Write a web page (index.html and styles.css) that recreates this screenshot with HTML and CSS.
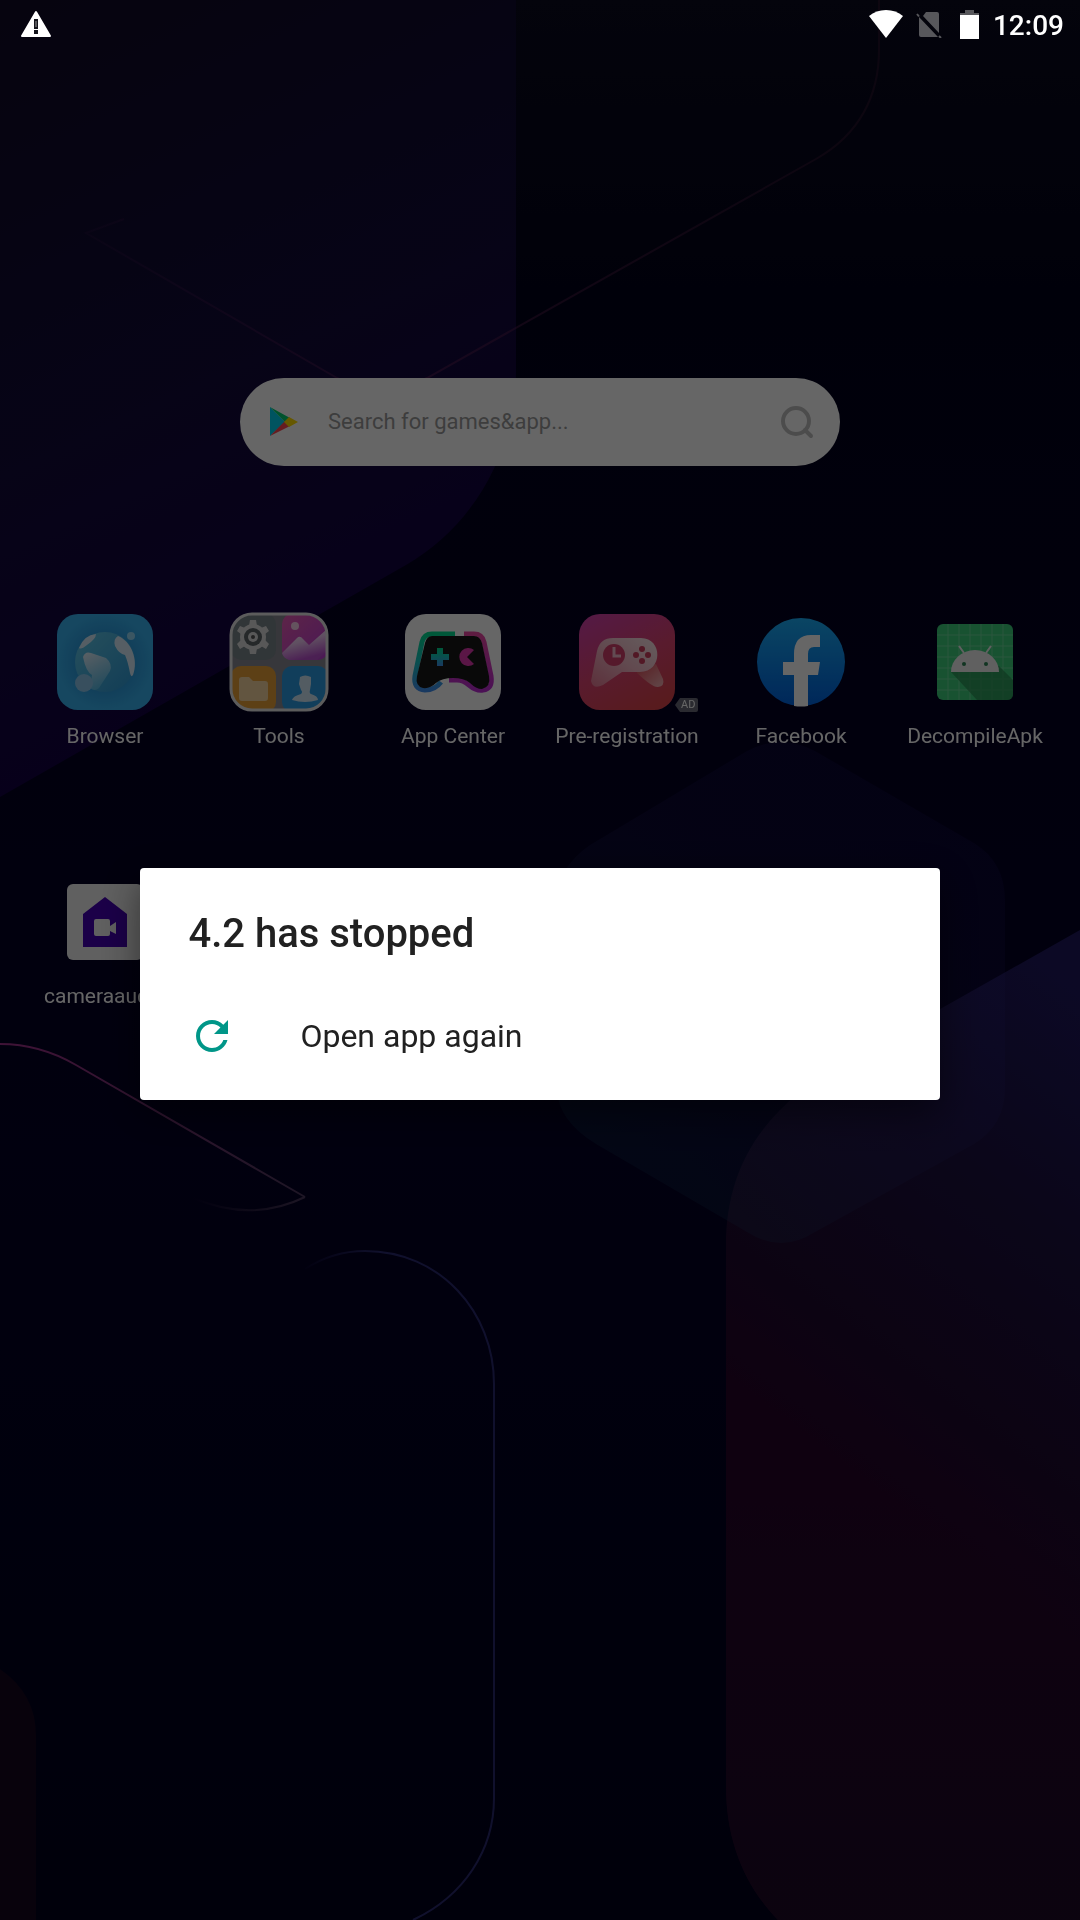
FILE: index.html
```html
<!DOCTYPE html>
<html lang="en">
<head>
<meta charset="utf-8">
<meta name="viewport" content="width=device-width, initial-scale=1">
<title>Home</title>
<link rel="stylesheet" href="styles.css">
</head>
<body>
<svg class="wallpaper" viewBox="0 0 1080 1920" preserveAspectRatio="xMidYMid slice" aria-hidden="true">
  <defs>
    <linearGradient id="sky" x1="0" y1="0" x2="0" y2="1">
      <stop offset="0" stop-color="#0a0a1e"/><stop offset=".15" stop-color="#02021a"/><stop offset=".3" stop-color="#030020"/>
      <stop offset=".6" stop-color="#040026"/><stop offset="1" stop-color="#00001c"/>
    </linearGradient>
    <linearGradient id="violet" x1="0" y1="0" x2=".3" y2="1">
      <stop offset="0" stop-color="#0f0b26"/><stop offset=".55" stop-color="#120a3a"/><stop offset="1" stop-color="#130046"/>
    </linearGradient>
    <linearGradient id="plum" gradientUnits="userSpaceOnUse" x1="1080" y1="980" x2="760" y2="1400">
      <stop offset="0" stop-color="#1e185e"/><stop offset=".4" stop-color="#1c1040"/><stop offset=".75" stop-color="#1e0a30"/><stop offset="1" stop-color="#26042a"/>
    </linearGradient>
    <linearGradient id="plumEnd" x1="0" y1="0" x2="0" y2="1">
      <stop offset="0" stop-color="#1c0c2c" stop-opacity="0"/><stop offset="1" stop-color="#1e0a26" stop-opacity=".9"/>
    </linearGradient>
    <linearGradient id="hexa" x1="1" y1="0" x2="0" y2="1">
      <stop offset="0" stop-color="#3020a0" stop-opacity=".12"/><stop offset=".5" stop-color="#303080" stop-opacity=".16"/><stop offset="1" stop-color="#107070" stop-opacity=".2"/>
    </linearGradient>
    <linearGradient id="fadeA" gradientUnits="userSpaceOnUse" x1="86" y1="0" x2="878" y2="0">
      <stop offset="0" stop-color="#502060" stop-opacity=".15"/><stop offset=".4" stop-color="#602058" stop-opacity=".55"/><stop offset="1" stop-color="#502040" stop-opacity=".35"/>
    </linearGradient>
    <linearGradient id="fadeB" gradientUnits="userSpaceOnUse" x1="0" y1="1040" x2="305" y2="1210">
      <stop offset="0" stop-color="#a0308a"/><stop offset="1" stop-color="#4a385c"/>
    </linearGradient>
    <linearGradient id="fadeC" gradientUnits="userSpaceOnUse" x1="193" y1="0" x2="305" y2="0">
      <stop offset="0" stop-color="#40304e" stop-opacity="0"/><stop offset="1" stop-color="#4a385c"/>
    </linearGradient>
    <linearGradient id="fadeD" gradientUnits="userSpaceOnUse" x1="300" y1="0" x2="380" y2="0">
      <stop offset="0" stop-color="#2a2a70" stop-opacity="0"/><stop offset="1" stop-color="#2a2a70"/>
    </linearGradient>
  </defs>
  <rect width="1080" height="1920" fill="url(#sky)"/>
  <path fill="url(#violet)" d="M0 0H516V370C516 450 475 525 406 565L0 797Z"/>
  <path fill="url(#plum)" d="M1080 930L850 1060C770 1102 726 1160 726 1245V1786C726 1840 744 1885 778 1920H1080Z"/>
  <path fill="url(#plumEnd)" d="M726 1500V1786C726 1840 744 1885 778 1920H1080V1500Z"/>
  <path fill="url(#hexa)" d="M747 751Q781 733 815 751L974 843Q1005 862 1005 900V1088Q1005 1125 974 1144L815 1232Q781 1254 747 1232L596 1144Q557 1120 557 1088V900Q557 868 590 845Z"/>
  <path fill="#140620" d="M0 1669Q36 1694 36 1735V1920H0Z"/>
  <g fill="none" stroke-width="2">
    <path stroke="url(#fadeA)" d="M124 219L86 233L337 378Q382 402 427 378L816 159C860 134 879 95 879 50V0"/>
    <path stroke="url(#fadeB)" d="M0 1044Q40 1044 76 1065L305 1197"/>
    <path stroke="url(#fadeC)" d="M305 1197Q252 1223 193 1198"/>
    <path stroke="url(#fadeD)" d="M305 1269C325 1256 345 1251 365 1251C440 1251 494 1312 494 1384V1798C494 1850 464 1896 413 1920"/>
  </g>
</svg>

<header class="status">
  <svg class="status-warn" viewBox="0 0 32 28" role="img" aria-label="Warning">
    <path fill="#fff" stroke="#fff" stroke-width="2" stroke-linejoin="round" d="M16 2L30 26H2Z"/>
    <path fill="none" stroke="#14141c" stroke-width="4" d="M16 9v10M16 20v4"/>
    <path fill="none" stroke="#999" stroke-width="1" d="M16 11v6"/>
  </svg>
  <div class="status-right">
    <svg class="ico-wifi" viewBox="0 0 34 28" role="img" aria-label="Wi-Fi"><path fill="#fff" d="M17 28L0 6Q7 0 17 0T34 6Z"/></svg>
    <svg class="ico-sim" viewBox="0 0 26 28" role="img" aria-label="No SIM"><path fill="#57575b" d="M10 2H21Q23 2 23 4V23L7 6ZM3 7L22 27H5Q3 27 3 25Z"/><path stroke="#57575b" stroke-width="2" d="M1 4L3 6.500M23 26L25 28"/></svg>
    <svg class="ico-bat" viewBox="0 0 20 30" role="img" aria-label="Battery"><path fill="#57575b" d="M5 1H14V4H19V7H0V4H5Z"/><path fill="#fff" d="M0 6H19V30H0Z"/></svg>
    <time class="clock">12:09</time>
  </div>
</header>

<main class="home">
  <form class="search" role="search">
    <svg class="play" viewBox="0 0 30 32" aria-hidden="true">
      <path fill="#00d2f0" d="M1 1V30L16 16Z"/><path fill="#00d070" d="M1 1L21 12L16 16Z"/><path fill="#ff4650" d="M1 30L21 20L16 15Z"/><path fill="#ffdc00" d="M20 11L29 16L20 21L15 16Z"/>
    </svg>
    <input class="search-input" type="text" aria-label="Search" placeholder="Search for games&amp;app...">
    <button class="search-go" type="button" aria-label="Go">
      <svg viewBox="0 0 34 34" fill="none" stroke="#bfbfbf" stroke-width="4" stroke-linecap="round"><circle cx="16" cy="16" r="13"/><path d="M25 25L31 31"/></svg>
    </button>
  </form>

  <nav class="apps">
    <a class="app" href="#browser">
      <span class="icon"><svg viewBox="0 0 96 96" aria-hidden="true">
        <defs><radialGradient id="bb"><stop offset=".5" stop-color="#2a98dc"/><stop offset="1" stop-color="#38b2f0"/></radialGradient>
        <linearGradient id="bg" x1="0" y1="0" x2="1" y2="1"><stop offset="0" stop-color="#62c8e8"/><stop offset="1" stop-color="#2c98d6"/></linearGradient>
        <linearGradient id="bl" x1="0" y1="0" x2=".4" y2="1"><stop offset="0" stop-color="#e4f0fa"/><stop offset="1" stop-color="#5cbce6"/></linearGradient></defs>
        <rect width="96" height="96" rx="21" fill="url(#bb)"/><circle cx="48" cy="48" r="30" fill="url(#bg)"/>
        <path fill="url(#bl)" d="M26 43Q28 37 34 39L49 44Q56 50 53 57L42 74Q38 78 33 74L35 61Q29 58 26 43Z"/>
        <path fill="#d4ecfa" d="M22 34Q27 21 39 20Q39 25 30 31Q24 36 22 34Z"/>
        <path fill="#d8ecfa" d="M61 22C74 27 82 46 76 61Q74 64 73 59Q71 48 68 41Q62 40 58 32Q56 25 61 22Z"/>
        <circle cx="74" cy="22" r="4" fill="#94d6f6"/><circle cx="27" cy="69" r="9" fill="#8cc6ec"/>
      </svg></span>
      <span class="label">Browser</span>
    </a>
    <a class="app" href="#tools">
      <span class="icon"><svg viewBox="0 0 96 96" aria-hidden="true">
        <defs><clipPath id="tc"><rect x="1" y="1" width="94" height="94" rx="20"/></clipPath>
        <linearGradient id="tp" x1="0" y1="0" x2="1" y2="1"><stop offset="0" stop-color="#ea5cb4"/><stop offset="1" stop-color="#b83cd4"/></linearGradient>
        <linearGradient id="tm" x1="0" y1="0" x2=".4" y2="1"><stop offset="0" stop-color="#fff"/><stop offset=".5" stop-color="#f0c8f4"/><stop offset="1" stop-color="#bc50d0"/></linearGradient></defs>
        <g clip-path="url(#tc)"><rect width="96" height="96" fill="#8a8a94"/>
        <rect x="0" y="0" width="45" height="46" rx="10" fill="#7c878c"/>
        <rect x="51" y="0" width="46" height="46" rx="10" fill="url(#tp)"/>
        <rect x="0" y="52" width="45" height="46" rx="10" fill="#e8a038"/>
        <rect x="51" y="52" width="46" height="46" rx="10" fill="#2c9ce4"/>
        <g fill="#dcdddd"><circle cx="22" cy="23" r="13"/><path d="M18 12L19 6H25L26 12ZM18 34L19 40H25L26 34Z"/>
        <path d="M10 20L6 17L9 12L14 14ZM34 20L38 17L35 12L30 14ZM10 26L6 30L9 35L14 32ZM34 26L38 30L35 35L30 32Z"/></g>
        <circle cx="22" cy="23" r="9" fill="#5c6468"/><circle cx="22" cy="23" r="5" fill="#dcdcdc"/><circle cx="22" cy="23" r="2" fill="#555"/>
        <circle cx="64" cy="12" r="4" fill="#fad0ec"/><path fill="url(#tm)" d="M51 39L66 24Q69 21 72 25L78 31L96 15V37L86 46H58Q52 44 51 39Z"/>
        <path fill="#f4d4a0" d="M8 66Q8 63 11 63H18L22 67H34Q37 67 37 70V84Q37 87 34 87H11Q8 87 8 84Z"/>
        <path fill="#d0e6f6" d="M69 63Q74 60 80 63V70L79 76Q78 79 80 80Q87 82 87 86Q74 90 61 86Q62 82 70 80Q72 78 70 76L68 70Z"/></g>
        <rect x="0" y="0" width="96" height="96" rx="21" fill="none" stroke="#e6e6e6" stroke-width="3"/>
      </svg></span>
      <span class="label">Tools</span>
    </a>
    <a class="app" href="#appcenter">
      <span class="icon"><svg viewBox="0 0 96 96" aria-hidden="true">
        <defs><linearGradient id="al" x1="0" y1="0" x2="0" y2="1"><stop offset="0" stop-color="#00dc90"/><stop offset=".45" stop-color="#14c8c0"/><stop offset="1" stop-color="#4090f0"/></linearGradient>
        <linearGradient id="ar" x1="0" y1="0" x2="0" y2="1"><stop offset="0" stop-color="#ec48a4"/><stop offset="1" stop-color="#bc2cd4"/></linearGradient></defs>
        <rect width="96" height="96" rx="21" fill="#fff"/>
        <path fill="none" stroke="url(#al)" stroke-width="5" d="M50 20H27Q19 20 17 28L10 62Q8 75 20 76Q30 76 36 68"/>
        <path fill="none" stroke="url(#ar)" stroke-width="5" d="M59 20H69Q77 20 79 28L86 62Q88 75 78 76Q71 77 64 71Q58 66 52 66H44"/>
        <path fill="#181818" d="M27 22H69Q75 22 77 29L84 62Q86 73 77 75Q71 75 65 69Q59 64 48 64Q37 64 31 69Q25 75 18 74Q10 72 12 62L20 29Q22 22 27 22Z"/>
        <path fill="url(#al)" d="M32 34H38V40H44V46H38V52H32V46H26V40H32Z"/>
        <path fill="#e038b0" d="M69 36L62 43L69 50A9 9 0 1 1 69 36Z"/>
      </svg></span>
      <span class="label">App Center</span>
    </a>
    <a class="app" href="#preregistration">
      <span class="icon"><svg viewBox="0 0 96 96" aria-hidden="true">
        <defs><linearGradient id="pb" x1=".2" y1="0" x2=".7" y2="1"><stop offset="0" stop-color="#d442a8"/><stop offset=".5" stop-color="#de4474"/><stop offset="1" stop-color="#dc444c"/></linearGradient>
        <linearGradient id="pg" x1="1" y1="0" x2="0" y2="1"><stop offset="0" stop-color="#fce8ea"/><stop offset=".5" stop-color="#f4b8c6"/><stop offset="1" stop-color="#e67894"/></linearGradient>
        <linearGradient id="pr" x1="0" y1="0" x2="1" y2="1"><stop offset="0" stop-color="#dc4854"/><stop offset="1" stop-color="#f4b4b8"/></linearGradient></defs>
        <rect width="96" height="96" rx="21" fill="url(#pb)"/>
        <path fill="url(#pr)" d="M58 56L77 50L84 65Q86 72 79 73Q74 74 58 59Z"/>
        <path fill="url(#pg)" d="M34 24H62C84 24 84 58 61 58H43L24 71Q14 76 12 67L18 37Q21 24 34 24Z"/>
        <circle cx="35" cy="41" r="11" fill="#d4406c"/><path fill="none" stroke="#f4bccc" stroke-width="3" d="M35 33V42H42"/>
        <g fill="#cc3c5c"><circle cx="63" cy="35" r="3"/><circle cx="63" cy="47" r="3"/><circle cx="57" cy="41" r="3"/><circle cx="69" cy="41" r="3"/></g>
      </svg><span class="ad">AD</span></span>
      <span class="label">Pre-registration</span>
    </a>
    <a class="app" href="#facebook">
      <span class="icon"><svg viewBox="0 0 96 96" aria-hidden="true">
        <defs><linearGradient id="fb" x1="0" y1="0" x2="0" y2="1"><stop offset="0" stop-color="#1aaef8"/><stop offset="1" stop-color="#0062e0"/></linearGradient></defs>
        <circle cx="48" cy="48" r="44" fill="url(#fb)"/>
        <path fill="#fff" d="M41 92V61H30V48H41V40Q41 21 58 21H67V33H61Q55 33 55 40V48H67L65 61H55V92Q48 93 41 92Z"/>
      </svg></span>
      <span class="label">Facebook</span>
    </a>
    <a class="app" href="#decompile">
      <span class="icon"><svg viewBox="0 0 96 96" aria-hidden="true">
        <rect x="10" y="10" width="76" height="76" rx="6" fill="#3ccc7c"/>
        <path fill="none" stroke="#6cd898" stroke-width="1" d="M21 10V86M32 10V86M43 10V86M54 10V86M65 10V86M76 10V86M10 21H86M10 32H86M10 43H86M10 54H86M10 65H86M10 76H86"/>
        <path fill="#2a8a50" opacity=".7" d="M24 58L50 86H80Q86 86 86 80V66L72 52Z"/>
        <path fill="#f0f0f0" d="M24 58A24 22 0 0 1 72 58Z"/><path stroke="#f0f0f0" stroke-width="2" d="M32 32L37 39M64 32L59 39"/>
        <circle cx="37" cy="50" r="2" fill="#2c8456"/><circle cx="59" cy="50" r="2" fill="#2c8456"/>
      </svg></span>
      <span class="label">DecompileApk</span>
    </a>
    <a class="app" href="#cameraaudio">
      <span class="icon"><svg viewBox="0 0 96 96" aria-hidden="true">
        <rect x="10" y="10" width="76" height="76" rx="6" fill="#f0f0f0"/>
        <path fill="#4400b4" d="M48 23L70 40V73H26V40Z"/>
        <path fill="#f0f0f0" d="M39 45H51Q53 45 53 47V52L59 48V60L53 57V60Q53 62 51 62H39Q37 62 37 60V47Q37 45 39 45Z"/>
      </svg></span>
      <span class="label">cameraaudio</span>
    </a>
  </nav>
</main>

<div class="scrim">
  <section class="dialog" role="alertdialog" aria-labelledby="dlg-title">
    <h1 class="dialog-title" id="dlg-title">4.2 has stopped</h1>
    <button class="dialog-action" type="button">
      <svg class="refresh" viewBox="0 0 24 24" aria-hidden="true"><path fill="#009688" d="M17.65 6.35C16.2 4.9 14.21 4 12 4c-4.42 0-7.99 3.58-7.99 8s3.57 8 7.99 8c3.73 0 6.84-2.55 7.73-6h-2.08c-.82 2.33-3.04 4-5.65 4-3.31 0-6-2.69-6-6s2.69-6 6-6c1.66 0 3.14.69 4.22 1.78L13 11h7V4l-2.35 2.35z"/></svg>
      <span>Open app again</span>
    </button>
  </section>
</div>
</body>
</html>
```
FILE: styles.css
```css
* { box-sizing: border-box; }

body {
  margin: 0;
  min-height: 100vh;
  background: #01000a;
  color: #fff;
  font-family: Roboto, "Noto Sans", sans-serif;
}

svg { display: block; }

.wallpaper {
  position: fixed;
  inset: 0;
  width: 100%;
  height: 100%;
}

/* Status bar stays bright above the scrim */
.status {
  position: relative;
  z-index: 3;
  display: flex;
  align-items: center;
  justify-content: space-between;
  height: 48px;
  padding: 0 16px 0 20px;
}
.status-warn { width: 32px; height: 28px; }
.status-right { display: flex; align-items: center; }
.ico-wifi { width: 34px; height: 28px; margin-right: 13px; }
.ico-sim { width: 26px; height: 28px; margin-right: 18px; }
.ico-bat { width: 20px; height: 30px; margin-right: 13px; }
.clock { padding-top: 3px; font-size: 28px; line-height: 45px; font-weight: 500; }

.home {
  position: relative;
  padding: 330px 18px 48px;
}

.search {
  display: flex;
  align-items: center;
  width: 58%;
  min-width: 320px;
  max-width: 600px;
  height: 88px;
  margin: 0 auto 148px;
  padding: 0 26px 0 28px;
  border-radius: 44px;
  background: #fff;
}
.play { width: 32px; height: 32px; }
.search-input {
  flex: 1;
  min-width: 0;
  margin: 0 24px 0 28px;
  padding: 0;
  border: 0;
  outline: 0;
  background: none;
  color: #333;
  font: 400 22px/32px Roboto, sans-serif;
}
.search-input::placeholder { color: #9a9a9a; opacity: 1; }
.search-go {
  width: 34px;
  height: 34px;
  padding: 0;
  border: 0;
  background: none;
}

.apps {
  display: grid;
  grid-template-columns: repeat(6, 1fr);
  row-gap: 122px;
}
.app {
  display: flex;
  flex-direction: column;
  align-items: center;
  gap: 10px;
  color: #fff;
  text-decoration: none;
}
.icon { position: relative; width: 96px; height: 96px; }
.icon svg { overflow: visible; }
.label { font-size: 21px; line-height: 32px; white-space: nowrap; }
.ad {
  position: absolute;
  left: 96px;
  bottom: -2px;
  padding: 0 3px 0 6px;
  border-radius: 2px;
  background: #6a6a78;
  clip-path: polygon(5px 0, 100% 0, 100% 100%, 5px 100%, 0 50%);
  color: #fff;
  font-size: 11px;
  line-height: 14px;
}

.scrim {
  position: fixed;
  inset: 0;
  z-index: 2;
  display: flex;
  align-items: center;
  justify-content: center;
  padding-top: 48px;
  background: rgba(0, 0, 0, .6);
}
.dialog {
  width: 74%;
  padding: 38px 0 20px;
  border-radius: 4px;
  background: #fff;
  color: #212121;
  box-shadow: 0 12px 40px rgba(0, 0, 0, .5);
}
.dialog-title {
  margin: 0 0 30px;
  padding: 0 48px;
  font-size: 40px;
  line-height: 56px;
  font-weight: 500;
}
.dialog-action {
  display: flex;
  align-items: center;
  gap: 64px;
  width: 100%;
  height: 88px;
  padding: 0 48px;
  border: 0;
  background: none;
  color: #212121;
  font: 400 32px/48px Roboto, sans-serif;
  text-align: left;
}
.refresh { width: 48px; height: 48px; }
```
